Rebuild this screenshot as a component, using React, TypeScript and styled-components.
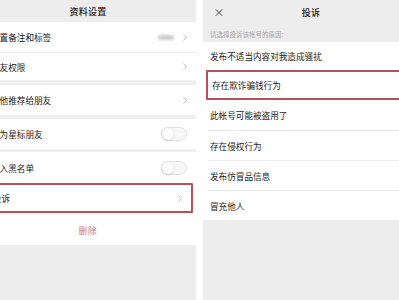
import styled, { createGlobalStyle } from "styled-components";

const GlobalStyle = createGlobalStyle`
  html, body {
    margin: 0;
    padding: 0;
    background: #ffffff;
  }
  body {
    font-family: "Noto Sans CJK SC", "Noto Sans", sans-serif;
    color: #1c1c1c;
  }
`;

const Page = styled.div`
  display: flex;
  gap: 7px;
  width: 399px;
  height: 300px;
  overflow: hidden;
  background: #ffffff;
`;

const Viewport = styled.div<{ $width: number }>`
  width: ${(p) => p.$width}px;
  height: 300px;
  flex-shrink: 0;
  overflow: hidden;
`;

const Phone = styled.div<{ $offset: number }>`
  width: 216px;
  height: 300px;
  margin-left: ${(p) => p.$offset}px;
  display: flex;
  flex-direction: column;
  background: #ffffff;
`;

const NavBar = styled.div<{ $height: number }>`
  height: ${(p) => p.$height}px;
  flex-shrink: 0;
  background: #ededed;
  display: flex;
  align-items: center;
  justify-content: center;
  position: relative;
`;

const NavTitle = styled.div`
  font-size: 9px;
  font-weight: 500;
  color: #1a1a1a;
  letter-spacing: 0.3px;
`;

const CloseButton = styled.div`
  position: absolute;
  left: 12px;
  top: 50%;
  transform: translateY(-55%);
  display: flex;
`;

const Hint = styled.div`
  height: 17px;
  flex-shrink: 0;
  background: #ededed;
  display: flex;
  align-items: center;
  padding-left: 7px;
  font-size: 6.5px;
  color: #a8a8a8;
`;

const Row = styled.div<{ $height: number; $pad: number }>`
  height: ${(p) => p.$height}px;
  flex-shrink: 0;
  display: flex;
  align-items: center;
  justify-content: space-between;
  padding: 0 9px 0 ${(p) => p.$pad}px;
  font-size: 8.6px;
  color: #1c1c1c;
  background: #ffffff;
  box-sizing: border-box;
`;

const Highlight = styled.div<{ $height: number }>`
  height: ${(p) => p.$height}px;
  flex-shrink: 0;
  margin: 0 3px;
  border: 2px solid #b8505a;
  border-radius: 1px;
  box-sizing: border-box;
  display: flex;
  flex-direction: column;
  justify-content: center;

  & > ${Row} {
    height: 100%;
  }
`;

const Line = styled.div<{ $inset: number }>`
  height: 1px;
  flex-shrink: 0;
  margin-left: ${(p) => p.$inset}px;
  background: #ececec;
`;

const Gap = styled.div<{ $height: number }>`
  height: ${(p) => p.$height}px;
  flex-shrink: 0;
  background: #efefef;
`;

const Spacer = styled.div<{ $height: number }>`
  height: ${(p) => p.$height}px;
  flex-shrink: 0;
`;

const Filler = styled.div`
  flex: 1;
  background: #ededed;
`;

const Trail = styled.div`
  display: flex;
  align-items: center;
  gap: 9px;
`;

const BlurredValue = styled.div`
  width: 16px;
  height: 5px;
  border-radius: 3px;
  background: #c9c9c9;
  filter: blur(1.5px);
`;

const Toggle = styled.div`
  width: 26px;
  height: 14px;
  border-radius: 7px;
  border: 1px solid #e2e2e2;
  background: #f7f7f7;
  box-sizing: border-box;
  display: flex;
  align-items: center;
`;

const Knob = styled.div`
  width: 12px;
  height: 12px;
  border-radius: 50%;
  background: #ffffff;
  box-shadow: 0 0.5px 1.5px rgba(0, 0, 0, 0.25);
`;

const DangerRow = styled.div`
  height: 30px;
  flex-shrink: 0;
  display: flex;
  align-items: center;
  justify-content: center;
  font-size: 8.6px;
  color: #c9737b;
  letter-spacing: 1px;
`;

const Chevron = () => (
  <svg width="4" height="7" viewBox="0 0 4 7">
    <path d="M0.5 0.5 L3.4 3.5 L0.5 6.5" fill="none" stroke="#b8b8b8" strokeWidth="0.9" />
  </svg>
);

const CloseIcon = () => (
  <svg width="8" height="8" viewBox="0 0 8 8">
    <path d="M0.8 0.8 L7.2 7.2 M7.2 0.8 L0.8 7.2" stroke="#333" strokeWidth="0.9" />
  </svg>
);

const ProfileSettings = () => (
  <Phone $offset={-20}>
    <NavBar $height={22}>
      <NavTitle>资料设置</NavTitle>
    </NavBar>
    <Row $height={30} $pad={11}>
      <span>设置备注和标签</span>
      <Trail>
        <BlurredValue />
        <Chevron />
      </Trail>
    </Row>
    <Line $inset={0} />
    <Row $height={27} $pad={11}>
      <span>朋友权限</span>
      <Chevron />
    </Row>
    <Gap $height={5} />
    <Row $height={30} $pad={11}>
      <span>把他推荐给朋友</span>
      <Chevron />
    </Row>
    <Gap $height={4} />
    <Row $height={30} $pad={11}>
      <span>设为星标朋友</span>
      <Toggle>
        <Knob />
      </Toggle>
    </Row>
    <Gap $height={3} />
    <Row $height={31} $pad={11}>
      <span>加入黑名单</span>
      <Toggle>
        <Knob />
      </Toggle>
    </Row>
    <Highlight $height={30}>
      <Row $height={26} $pad={8}>
        <span>投诉</span>
        <Chevron />
      </Row>
    </Highlight>
    <Spacer $height={2} />
    <DangerRow>删除</DangerRow>
    <Filler />
  </Phone>
);

const reasons = [
  "此帐号可能被盗用了",
  "存在侵权行为",
  "发布仿冒品信息",
  "冒充他人",
];

const Complaint = () => (
  <Phone $offset={0}>
    <NavBar $height={25}>
      <CloseButton>
        <CloseIcon />
      </CloseButton>
      <NavTitle>投诉</NavTitle>
    </NavBar>
    <Hint>请选择投诉该帐号的原因:</Hint>
    <Row $height={28} $pad={7}>
      <span>发布不适当内容对我造成骚扰</span>
    </Row>
    <Highlight $height={30}>
      <Row $height={26} $pad={4}>
        <span>存在欺诈骗钱行为</span>
      </Row>
    </Highlight>
    {reasons.map((r, i) => (
      <div key={r}>
        {i > 0 && <Line $inset={5} />}
        <Row $height={i === 0 ? 30 : 29} $pad={7}>
          <span>{r}</span>
        </Row>
      </div>
    ))}
    <Filler />
  </Phone>
);

export default function App() {
  return (
    <>
      <GlobalStyle />
      <Page>
        <Viewport $width={196}>
          <ProfileSettings />
        </Viewport>
        <Viewport $width={196}>
          <Complaint />
        </Viewport>
      </Page>
    </>
  );
}
